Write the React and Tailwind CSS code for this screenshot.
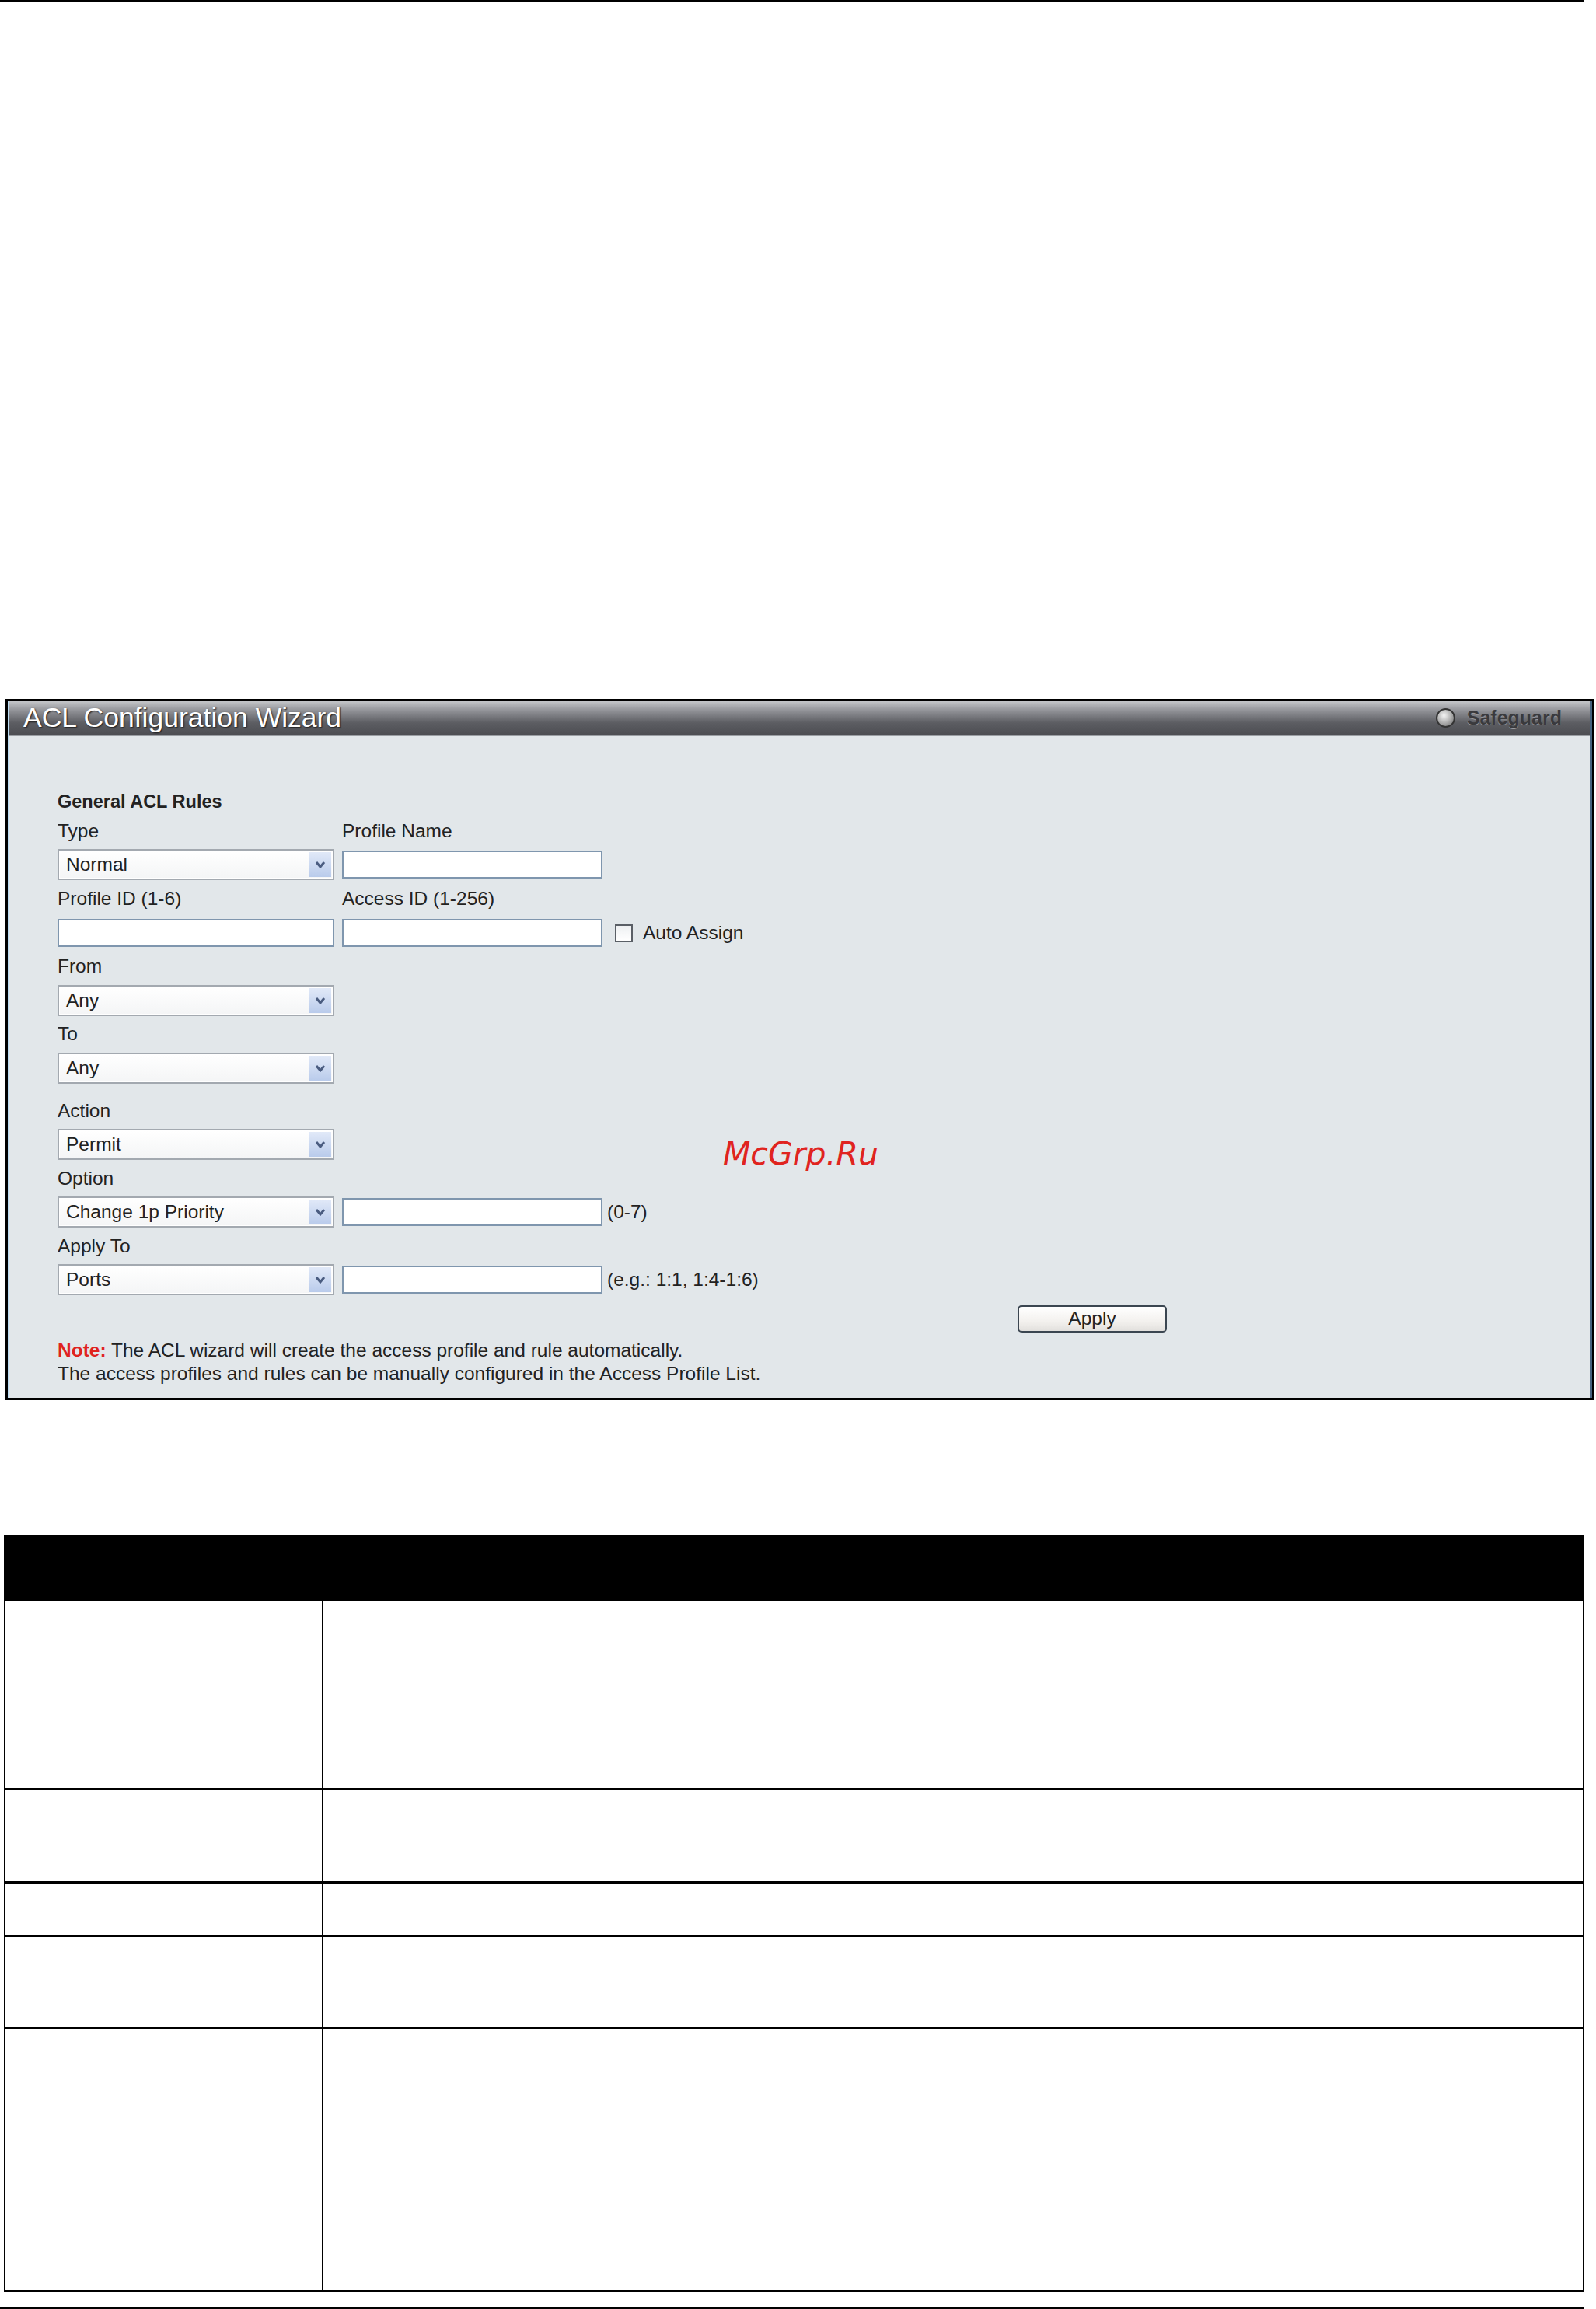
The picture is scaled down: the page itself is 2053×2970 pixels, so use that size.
import React from 'react';

function Select({ value }) {
  return (
    <div className="relative flex h-[40px] w-[356px] items-center border-2 border-[#a3a9b0] bg-[linear-gradient(to_bottom,#ffffff,#f4f5f6)] pl-[9px] shadow-[inset_0_0_0_1px_#ffffff]">
      <span className="text-[24.5px] leading-none text-[#222]">{value}</span>
      <div className="absolute right-[2px] top-[2px] bottom-[2px] flex w-[28px] items-center justify-center bg-[linear-gradient(to_bottom,#e1e9f8,#b9cbeb)]">
        <svg width="14" height="10" viewBox="0 0 14 10">
          <path d="M2 2 L7 8 L12 2" fill="none" stroke="#4a5c80" strokeWidth="3" />
        </svg>
      </div>
    </div>
  );
}

function TextBox({ w = 'w-[335px]' }) {
  return <div className={`h-[36px] ${w} border-2 border-[#7f96ae] bg-white`} />;
}

function Label({ children, className = '' }) {
  return <div className={`h-[30px] text-[24.5px] leading-[30px] text-[#222] ${className}`}>{children}</div>;
}

function Row({ className = '', last = false }) {
  return (
    <div className={`grid grid-cols-[409px_1fr] ${last ? '' : 'border-b-[3px] border-black'} ${className}`}>
      <div className="border-r-2 border-black" />
      <div />
    </div>
  );
}

export default function App() {
  return (
    <div className="relative h-[2970px] w-[2053px] bg-white font-['Liberation_Sans',Arial,sans-serif]">
      <div className="h-[3px] w-[2038px] bg-black" />

      {/* wizard panel */}
      <div className="ml-[7px] mt-[896px] w-[2044px] border-[3px] border-black">
        <div className="border-l-2 border-r-[3px] border-l-[#bcdcf2] border-r-[#46627e]">
          <div className="flex h-[45px] items-center justify-between border-b-2 border-[#9a9ea3] bg-[linear-gradient(to_bottom,#c4c6c9_0%,#8e8f94_30%,#5c5d62_65%,#4d4e53_100%)] pl-[18px] pr-[36px]">
            <span className="text-[35.5px] leading-none text-white [text-shadow:1px_1px_2px_#1a1a1a]">ACL Configuration Wizard</span>
            <div className="flex items-center gap-[15px]">
              <div className="h-[25px] w-[25px] rounded-full border-2 border-[#333] bg-[radial-gradient(circle_at_40%_35%,#f5f5f5,#b0b0b0_50%,#666)]" />
              <span className="text-[25px] font-bold leading-none text-[#3a3a3d] [text-shadow:0_1px_0_#9a9ba0]">Safeguard</span>
            </div>
          </div>

          <div className="h-[851px] bg-[#e2e7ea] pl-[62px] pt-[69px]">
            <div className="h-[30px] text-[23.5px] font-bold leading-[30px] text-[#222]">General ACL Rules</div>

            <div className="mt-[8px] flex">
              <Label className="w-[366px]">Type</Label>
              <Label>Profile Name</Label>
            </div>
            <div className="mt-[8px] flex h-[40px] items-center gap-[10px]">
              <Select value="Normal" />
              <TextBox />
            </div>

            <div className="mt-[9px] flex">
              <Label className="w-[366px]">Profile ID (1-6)</Label>
              <Label>Access ID (1-256)</Label>
            </div>
            <div className="mt-[9px] flex h-[40px] items-center">
              <TextBox w="w-[356px]" />
              <div className="ml-[10px]"><TextBox /></div>
              <div className="ml-[16px] h-[23px] w-[23px] border-2 border-[#5a5f66] bg-[linear-gradient(to_bottom,#eef0f2,#ffffff)]" />
              <span className="ml-[13px] text-[24.5px] leading-none text-[#222]">Auto Assign</span>
            </div>

            <Label className="mt-[8px]">From</Label>
            <div className="mt-[9px]"><Select value="Any" /></div>

            <Label className="mt-[8px]">To</Label>
            <div className="mt-[9px]"><Select value="Any" /></div>

            <Label className="mt-[20px]">Action</Label>
            <div className="mt-[8px]"><Select value="Permit" /></div>

            <Label className="mt-[9px]">Option</Label>
            <div className="mt-[8px] flex h-[40px] items-center">
              <Select value="Change 1p Priority" />
              <div className="ml-[10px]"><TextBox /></div>
              <span className="ml-[6px] text-[24.5px] leading-none text-[#222]">(0-7)</span>
            </div>

            <Label className="mt-[9px]">Apply To</Label>
            <div className="mt-[8px] flex h-[40px] items-center">
              <Select value="Ports" />
              <div className="ml-[10px]"><TextBox /></div>
              <span className="ml-[6px] text-[24.5px] leading-none text-[#222]">(e.g.: 1:1, 1:4-1:6)</span>
            </div>

            <div className="mt-[13px] pl-[1235px]">
              <button className="flex h-[35px] w-[192px] items-center justify-center rounded-[5px] border-2 border-[#3b4651] bg-[linear-gradient(to_bottom,#ffffff,#f3f1ee_60%,#e2e0dd)] text-[24.5px] leading-none text-[#222]">
                Apply
              </button>
            </div>

            <div className="mt-[8px] text-[24.5px] leading-[30px] text-[#222]">
              <div><span className="font-bold text-[#e0231f]">Note:</span> The ACL wizard will create the access profile and rule automatically.</div>
              <div>The access profiles and rules can be manually configured in the Access Profile List.</div>
            </div>
          </div>
        </div>
      </div>

      {/* parameter table */}
      <div className="ml-[5px] mt-[174px] w-[2033px] border-x-2 border-b-[3px] border-black">
        <div className="h-[84px] bg-black" />
        <Row className="h-[244px]" />
        <Row className="h-[120px]" />
        <Row className="h-[69px]" />
        <Row className="h-[118px]" />
        <Row className="h-[335px]" last />
      </div>

      <div className="mt-[20px] h-[3px] w-[2038px] bg-black" />

      <div className="absolute left-[930px] top-[1464px] font-['DejaVu_Sans',sans-serif] text-[41px] italic leading-none text-[#e0241f]">
        McGrp.Ru
      </div>
    </div>
  );
}
